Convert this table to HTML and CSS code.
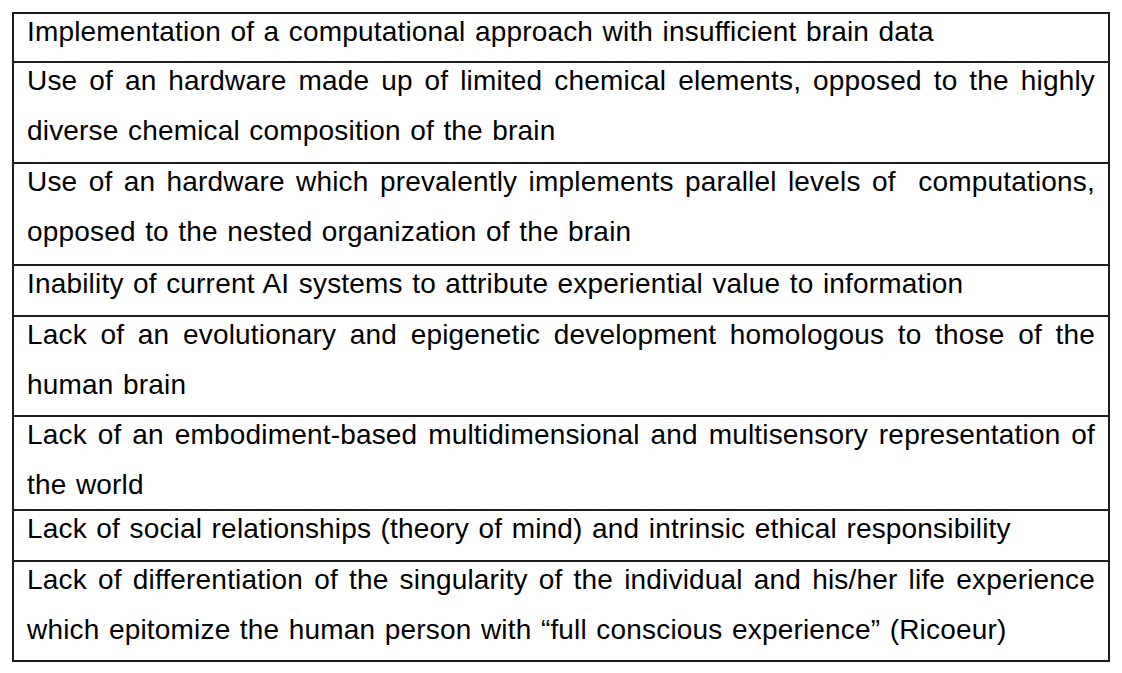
FILE: index.html
```html
<!DOCTYPE html>
<html>
<head>
<meta charset="utf-8">
<link rel="stylesheet" href="styles.css">
</head>
<body>
<div class="page">
<table class="limits">
<tr class="row-a"><td><div class="t">Implementation of a computational approach with insufficient brain data</div></td></tr>
<tr class="row-b"><td><div class="t">Use of an hardware made up of limited chemical elements, opposed to the highly diverse chemical composition of the brain</div></td></tr>
<tr class="row-c"><td><div class="t">Use of an hardware which prevalently implements parallel levels of&nbsp; computations, opposed to the nested organization of the brain</div></td></tr>
<tr class="row-d"><td><div class="t">Inability of current AI systems to attribute experiential value to information</div></td></tr>
<tr class="row-e"><td><div class="t">Lack of an evolutionary and epigenetic development homologous to those of the human brain</div></td></tr>
<tr class="row-f"><td><div class="t">Lack of an embodiment-based multidimensional and multisensory representation of the world</div></td></tr>
<tr class="row-d"><td><div class="t">Lack of social relationships (theory of mind) and intrinsic ethical responsibility</div></td></tr>
<tr class="row-e"><td><div class="t">Lack of differentiation of the singularity of the individual and his/her life experience which epitomize the human person with “full conscious experience” (Ricoeur)</div></td></tr>
</table>
</div>
</body>
</html>
```
FILE: styles.css
```css
html, body {
  margin: 0;
  padding: 0;
  background: #ffffff;
}
.page {
  padding: 12px 12px 0 12px;
}
.limits {
  width: 1098px;
  border-collapse: collapse;
  font-family: "Liberation Sans", Arial, sans-serif;
  font-size: 28px;
  letter-spacing: 0.18px;
  word-spacing: 1.5px;
  color: #000;
}
.limits td {
  border: 2px solid #1e1e1e;
  padding: 0 13px 0 13px;
  vertical-align: top;
  line-height: 49.5px;
  text-align: justify;
  overflow: hidden;
}
.limits .t {
  margin-top: -7px;
}
.row-a td { height: 47px; }
.row-b td { height: 99px; }
.row-c td { height: 100px; }
.row-d td { height: 49px; }
.row-e td { height: 98px; }
.row-f td { height: 91px; }
```
